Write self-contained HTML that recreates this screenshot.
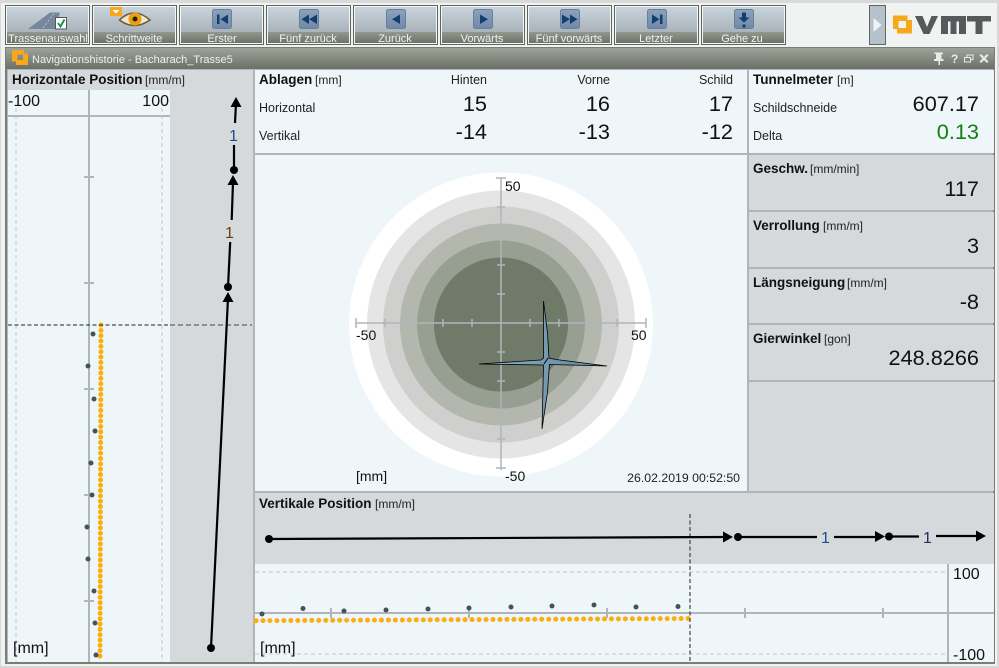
<!DOCTYPE html>
<html><head><meta charset="utf-8"><style>
html,body{margin:0;padding:0;width:999px;height:668px;overflow:hidden;background:#f1f3f3}
svg{display:block;font-family:"Liberation Sans",sans-serif}
.t{font-size:11px;fill:#f2f4f4;text-anchor:middle}
.b{font-size:13.5px;font-weight:bold;fill:#111}
.u{font-size:12px;fill:#222}
.l{font-size:12.5px;fill:#222}
.v{font-size:21.7px;fill:#111;text-anchor:end}
.n{font-size:14px;fill:#111}
.a{font-size:16px;fill:#111}
.dash{stroke:#c2c6c8;stroke-dasharray:4 3;fill:none}
</style></head><body>
<svg width="999" height="668" viewBox="0 0 999 668" xmlns="http://www.w3.org/2000/svg">
<defs>
<linearGradient id="btnT" x1="0" y1="0" x2="0" y2="1"><stop offset="0" stop-color="#c8d3dc"/><stop offset="1" stop-color="#a9b2b8"/></linearGradient>
<linearGradient id="btnB" x1="0" y1="0" x2="0" y2="1"><stop offset="0" stop-color="#94978d"/><stop offset="1" stop-color="#6e736a"/></linearGradient>
<linearGradient id="title" x1="0" y1="0" x2="0" y2="1"><stop offset="0" stop-color="#9fa298"/><stop offset="1" stop-color="#6b7066"/></linearGradient>
<linearGradient id="ic" x1="0" y1="0" x2="0" y2="1"><stop offset="0" stop-color="#8ca2bc"/><stop offset="1" stop-color="#7189a8"/></linearGradient>
<linearGradient id="star" x1="0" y1="0" x2="1" y2="0"><stop offset="0" stop-color="#8fb3cb"/><stop offset="1" stop-color="#5f8199"/></linearGradient>
<g id="btn"><rect x="0.5" y="0.5" width="84" height="39" fill="#f4f5f5" stroke="#5f655f"/><rect x="2" y="2" width="81" height="26" fill="url(#btnT)"/><rect x="2" y="27" width="81" height="11" fill="url(#btnB)"/></g>
<g id="ibox"><rect x="-9.5" y="-9.5" width="19" height="19" rx="2" fill="url(#ic)" stroke="#67809c"/></g>
</defs>

<!-- outer edge -->
<rect x="0" y="0" width="999" height="3" fill="#d9d9d9"/>
<rect x="997" y="0" width="2" height="668" fill="#d8d8d8"/>
<rect x="0" y="0" width="1" height="668" fill="#d8d8d8"/>
<rect x="0" y="666" width="999" height="2" fill="#d8d8d8"/>

<!-- toolbar -->
<use href="#btn" x="5" y="5"/><use href="#btn" x="92" y="5"/><use href="#btn" x="179" y="5"/><use href="#btn" x="266" y="5"/><use href="#btn" x="353" y="5"/><use href="#btn" x="440" y="5"/><use href="#btn" x="527" y="5"/><use href="#btn" x="614" y="5"/><use href="#btn" x="701" y="5"/>
<text class="t" x="48" y="42">Trassenauswahl</text>
<text class="t" x="134" y="42">Schrittweite</text>
<text class="t" x="222" y="42">Erster</text>
<text class="t" x="308" y="42">Fünf zurück</text>
<text class="t" x="395" y="42">Zurück</text>
<text class="t" x="482" y="42">Vorwärts</text>
<text class="t" x="569" y="42">Fünf vorwärts</text>
<text class="t" x="656" y="42">Letzter</text>
<text class="t" x="742" y="42">Gehe zu</text>

<!-- icon: Trassenauswahl -->
<path d="M28 29 L50 12.500 L60 12.500 L55 29 Z" fill="#76879b"/>
<path d="M43 28 L54 13" stroke="#b8c4d0" stroke-dasharray="2 2" fill="none"/>
<rect x="55.500" y="17.500" width="11" height="11.500" fill="#fff" stroke="#555"/>
<path d="M58 23 L60.500 26.500 L64.500 19.500" stroke="#118a44" stroke-width="1.800" fill="none"/>
<!-- icon: eye -->
<rect x="110" y="7" width="12" height="9" fill="#f7a81b"/>
<path d="M112.500 10 L119.500 10 L116 13.500 Z" fill="#fff"/>
<path d="M119.500 20 Q134 6 150 20 Q134 31 119.500 20 Z" fill="#f0e6c8" stroke="#6b5b3a" stroke-width="1.500"/>
<circle cx="135" cy="19" r="6.500" fill="#e9a013"/><circle cx="135" cy="19" r="2.500" fill="#2b2206"/>
<!-- nav icons -->
<g fill="#123f6c">
<use href="#ibox" x="222" y="19"/><path d="M217 14.500h2.500v9.500h-2.500zM228 14.500v9.500l-7.500-4.750z"/>
<use href="#ibox" x="309" y="19"/><path d="M309 14.500v9.500l-7.500-4.750zM317 14.500v9.500l-8-4.750z"/>
<use href="#ibox" x="396" y="19"/><path d="M400 14.500v9.500l-8-4.750z"/>
<use href="#ibox" x="483" y="19"/><path d="M480 14.500v9.500l8-4.750z"/>
<use href="#ibox" x="570" y="19"/><path d="M562 14.500v9.500l8-4.750zM570 14.500v9.500l7.500-4.750z"/>
<use href="#ibox" x="657" y="19"/><path d="M652 14.500v9.500l7.500-4.750zM660 14.500h2.500v9.500h-2.500z"/>
<use href="#ibox" x="744" y="19"/><path d="M742 12.500h4v5h3.500l-5.500 5-5.500-5h3.500zM742.500 24.500h3v3h-3z"/>
</g>
<!-- expander -->
<rect x="869.500" y="5.500" width="16" height="39" fill="#b5c1cb" stroke="#5f655f"/>
<path d="M873.500 18v14l8-7z" fill="#f2f4f4"/>
<!-- logo -->
<path d="M893 15.500H907.500V20H912V33.500H897V29H893Z M898.500 21V28H906V21Z" fill="#f7a81b" fill-rule="evenodd"/>
<path d="M915 16h7.500l4.500 11 4.500-11h6.500l-8.500 18h-6z" fill="#58595b"/>
<path d="M941 34V16H966V34H959V21.500H956.500V34H950.500V21.500H948V34Z" fill="#58595b"/>
<path d="M967 16H991V21.500H982.500V34H975.500V21.500H967Z" fill="#58595b"/>

<!-- window -->
<rect x="5" y="47" width="990" height="617" fill="#7a7f76"/>
<rect x="6" y="48" width="988" height="21" fill="url(#title)"/>
<rect x="7" y="69" width="986" height="593" fill="#b0b5b9"/>
<path d="M12 50H24V53.500H28V65H16V61.500H12Z M17.500 54.500V60H23V54.500Z" fill="#f7a81b" fill-rule="evenodd"/>
<text x="32" y="63" font-size="11" fill="#eef1f1">Navigationshistorie - Bacharach_Trasse5</text>
<g fill="#e9ecec">
<path d="M934.500 52.500h8.500v1.500h-1.500V59h2v2h-3.500V65h-1.500v-4H934v-2h2V54h-1.500z"/>
<text x="951" y="63" font-size="12" font-weight="bold">?</text>
<path d="M964.500 57.500h6v4.500h-6z M967 57V55h6v4.500h-2" fill="none" stroke="#e9ecec"/>
<path d="M979.500 55.500l1.500-1.500 3 3 3-3 1.500 1.500-3 3 3 3-1.500 1.500-3-3-3 3-1.500-1.500 3-3z"/>
</g>

<!-- left panel -->
<rect x="8" y="70" width="245" height="592" fill="#d5d9dc"/>
<rect x="8" y="90" width="162" height="572" fill="#eff6f9"/>
<rect x="8" y="115" width="162" height="2" fill="#b0b5b9"/>
<text class="b" x="12" y="84">Horizontale Position</text><text class="u" x="145" y="84">[mm/m]</text>
<text class="a" x="8" y="106">-100</text>
<text class="a" x="169" y="106" text-anchor="end">100</text>
<path class="dash" d="M16 108V662M162 108V662"/>
<path d="M89 90V662" stroke="#b0b5b9" stroke-width="2"/>
<path d="M84 177h10M84 283h10M84 389h10M84 495h10M84 601h10" stroke="#b0b5b9" stroke-width="2"/>
<path d="M101 325L100 659" stroke="#fdad0c" stroke-width="5" stroke-linecap="round" stroke-dasharray="0 5.340" fill="none"/>
<g fill="#42535d"><circle cx="93" cy="334" r="2.500"/><circle cx="88" cy="366" r="2.500"/><circle cx="94" cy="399" r="2.500"/><circle cx="95" cy="431" r="2.500"/><circle cx="91" cy="463" r="2.500"/><circle cx="92" cy="495" r="2.500"/><circle cx="87" cy="527" r="2.500"/><circle cx="88" cy="559" r="2.500"/><circle cx="94" cy="591" r="2.500"/><circle cx="95" cy="623" r="2.500"/><circle cx="96" cy="655" r="2.500"/></g>
<path d="M8 325H170" stroke="#222" stroke-dasharray="4 2.500"/>
<path d="M170 325H252" stroke="#444" stroke-dasharray="5 3"/>
<text class="a" x="13" y="653">[mm]</text>
<g stroke="#000" stroke-width="2.200" fill="none"><path d="M211 648L228 298"/><path d="M228 287L230.200 242M231.700 220L233 182"/><path d="M234 170L234 145M235 123L236 103"/></g>
<g fill="#000"><circle cx="211" cy="648" r="4"/><circle cx="228" cy="287" r="4"/><circle cx="234" cy="170" r="4"/><path d="M228 292l5.500 10h-11z"/><path d="M233 175l5.500 10h-11z"/><path d="M236 97l5.500 10h-11z"/></g>
<text x="229.500" y="238" font-size="16" fill="#6b3c10" text-anchor="middle">1</text>
<text x="233.500" y="141" font-size="16" fill="#164f8a" text-anchor="middle">1</text>

<!-- top centre -->
<rect x="255" y="70" width="492" height="83" fill="#eff6f9"/>
<text class="b" x="259" y="84">Ablagen</text><text class="u" x="315" y="84">[mm]</text>
<text class="l" x="487" y="84" text-anchor="end">Hinten</text>
<text class="l" x="610" y="84" text-anchor="end">Vorne</text>
<text class="l" x="733" y="84" text-anchor="end">Schild</text>
<text class="l" x="259" y="112">Horizontal</text>
<text class="l" x="259" y="140">Vertikal</text>
<text class="v" x="487" y="111">15</text><text class="v" x="610" y="111">16</text><text class="v" x="733" y="111">17</text>
<text class="v" x="487" y="139">-14</text><text class="v" x="610" y="139">-13</text><text class="v" x="733" y="139">-12</text>

<!-- right -->
<rect x="749" y="70" width="245" height="83" fill="#eff6f9"/>
<text class="b" x="753" y="84">Tunnelmeter</text><text class="u" x="837" y="84">[m]</text>
<text class="l" x="753" y="112">Schildschneide</text>
<text class="l" x="753" y="140">Delta</text>
<text class="v" x="979" y="111">607.17</text>
<text class="v" x="979" y="139" style="fill:#108010">0.13</text>
<rect x="749" y="155" width="245" height="55" fill="#d5d9dc"/>
<rect x="749" y="212" width="245" height="55" fill="#d5d9dc"/>
<rect x="749" y="269" width="245" height="54" fill="#d5d9dc"/>
<rect x="749" y="325" width="245" height="55" fill="#d5d9dc"/>
<rect x="749" y="382" width="245" height="109" fill="#d5d9dc"/>
<text class="b" x="753" y="173">Geschw.</text><text class="u" x="810" y="173">[mm/min]</text>
<text class="v" x="979" y="196">117</text>
<text class="b" x="753" y="230">Verrollung</text><text class="u" x="823" y="230">[mm/m]</text>
<text class="v" x="979" y="253">3</text>
<text class="b" x="753" y="287">Längsneigung</text><text class="u" x="847" y="287">[mm/m]</text>
<text class="v" x="979" y="309">-8</text>
<text class="b" x="753" y="343">Gierwinkel</text><text class="u" x="824" y="343">[gon]</text>
<text class="v" x="979" y="365">248.8266</text>

<!-- polar -->
<rect x="255" y="155" width="492" height="336" fill="#eff6f9"/>
<circle cx="501" cy="324.500" r="152" fill="#fff"/>
<circle cx="501" cy="324.500" r="134" fill="#e5e5e5"/>
<circle cx="501" cy="324.500" r="118" fill="#cfd0cd"/>
<circle cx="501" cy="324.500" r="101" fill="#b3b7ae"/>
<circle cx="501" cy="324.500" r="84" fill="#979f92"/>
<circle cx="501" cy="324.500" r="67" fill="#6f7a68"/>
<path d="M356 323H646M501 178V470" stroke="#b0b5b9" stroke-width="1.500" fill="none"/>
<path d="M356 318v10M385 319v8M414 319v8M443 319v8M472 319v8M530 319v8M559 319v8M588 319v8M617 319v8M646 318v10" stroke="#b0b5b9" stroke-width="1.500"/>
<path d="M496 178h10M497 207h8M497 236h8M497 265h8M497 294h8M497 352h8M497 381h8M497 410h8M497 439h8M496 468h10" stroke="#b0b5b9" stroke-width="1.500"/>
<path d="M543.500 301L547.500 333L549 358L556 359.500L607 366L549.500 364.500L547.500 392L542 429L543.500 365L479 364L541 360L543.500 358Z" fill="url(#star)" stroke="#000" stroke-width="0.800"/>
<path d="M544 364L548 358" stroke="#000"/>
<text class="n" x="505" y="191">50</text>
<text class="n" x="356" y="340">-50</text>
<text class="n" x="631" y="340">50</text>
<text class="n" x="505" y="481">-50</text>
<text class="n" x="356" y="481">[mm]</text>
<text x="740" y="482" font-size="12.300" fill="#222" text-anchor="end">26.02.2019 00:52:50</text>

<!-- vertical -->
<rect x="255" y="493" width="739" height="169" fill="#d5d9dc"/>
<rect x="255" y="564" width="739" height="98" fill="#eff6f9"/>
<text class="b" x="259" y="508">Vertikale Position</text><text class="u" x="375" y="508">[mm/m]</text>
<path class="dash" d="M255 572H948M255 654H948"/>
<path d="M255 613H994M948 564V662" stroke="#b0b5b9" stroke-width="2" fill="none"/>
<path d="M331 608v10M469 608v10M607 608v10M745 608v10M883 608v10" stroke="#b0b5b9" stroke-width="2"/>
<path d="M256 620.700L690 618.500" stroke="#fdad0c" stroke-width="5" stroke-linecap="round" stroke-dasharray="0 6.970" fill="none"/>
<g fill="#42535d"><circle cx="262" cy="614" r="2.500"/><circle cx="303" cy="608.500" r="2.500"/><circle cx="344" cy="611" r="2.500"/><circle cx="386" cy="610" r="2.500"/><circle cx="428" cy="609" r="2.500"/><circle cx="469" cy="608" r="2.500"/><circle cx="511" cy="607" r="2.500"/><circle cx="552" cy="606" r="2.500"/><circle cx="594" cy="605" r="2.500"/><circle cx="636" cy="607" r="2.500"/><circle cx="678" cy="606.500" r="2.500"/></g>
<path d="M690 514V662" stroke="#222" stroke-dasharray="4 2.500"/>
<text class="a" x="260" y="653">[mm]</text>
<text class="a" x="953" y="579">100</text>
<text class="a" x="953" y="660">-100</text>
<g stroke="#000" stroke-width="2.200" fill="none"><path d="M269 539L725 537"/><path d="M738 537H817M834 537H876"/><path d="M889 536.500H919M936 536H977"/></g>
<g fill="#000"><circle cx="269" cy="539" r="4"/><circle cx="738" cy="537" r="4"/><circle cx="889" cy="536.500" r="4"/><path d="M733 537l-10-5.500v11z"/><path d="M885 536.500l-10-5.500v11z"/><path d="M986 536l-10-5.500v11z"/></g>
<text x="825.500" y="543" font-size="16" fill="#164f8a" text-anchor="middle">1</text>
<text x="927.500" y="543" font-size="16" fill="#2b2b55" text-anchor="middle">1</text>
</svg>
</body></html>
